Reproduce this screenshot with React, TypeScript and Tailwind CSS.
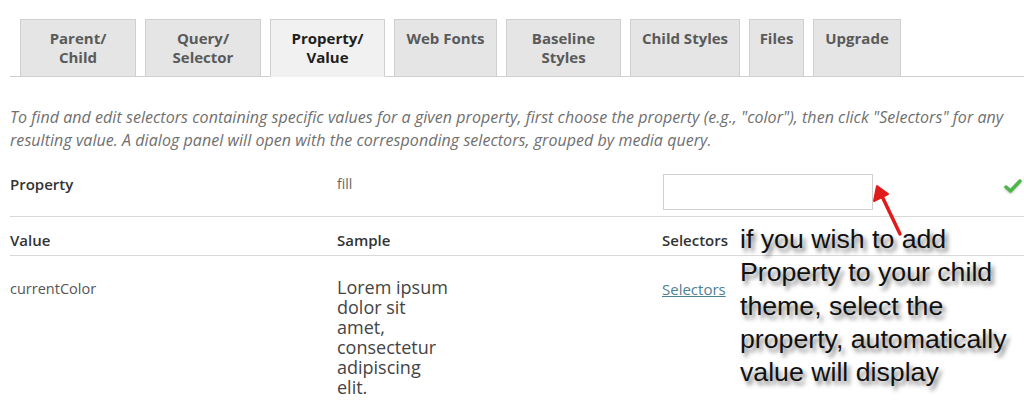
import { memo } from 'react'

const tabs = [
  { label: ['Parent/', 'Child'], w: 'w-[116px]' },
  { label: ['Query/', 'Selector'], w: 'w-[116px]' },
  { label: ['Property/', 'Value'], w: 'w-[115px]', active: true },
  { label: ['Web Fonts'], w: 'w-[103px]' },
  { label: ['Baseline', 'Styles'], w: 'w-[115px]' },
  { label: ['Child Styles'], w: 'w-[110px]' },
  { label: ['Files'], w: 'w-[55px]' },
  { label: ['Upgrade'], w: 'w-[88px]' },
]

const TabBar = () => (
  <div className="ml-[10px] mt-[19px] flex h-[58px] items-end gap-[9px] border-b border-[#cfcfcf] pl-[10px]">
    {tabs.map((t) => (
      <div
        key={t.label.join('')}
        className={`${t.w} -mb-px flex h-[58px] flex-col items-center border border-[#cfcfcf] pt-[9px] text-[15px] leading-[19px] font-bold ${
          t.active
            ? 'border-b-[#f1f1f1] bg-[#f1f1f1] text-[#1e1e1e]'
            : 'bg-[#e5e5e5] text-[#5a5a5a]'
        }`}
      >
        {t.label.map((l) => (
          <span key={l}>{l}</span>
        ))}
      </div>
    ))}
  </div>
)

const Check = () => (
  <svg width="18" height="16" viewBox="0 0 18 16" className="drop-shadow-[0_1px_1px_rgba(0,0,0,0.25)]">
    <path d="M2 9 L6.5 13 L16 3" fill="none" stroke="#4cb648" strokeWidth="3.4" strokeLinecap="round" strokeLinejoin="round" />
  </svg>
)

const Arrow = () => (
  <svg width="40" height="60" viewBox="0 0 40 60" className="absolute left-[866px] top-[182px]">
    <path d="M34 52 L14 10" stroke="#e01b1b" strokeWidth="3.5" strokeLinecap="round" />
    <path d="M11 4 L8 19 L22 12 Z" fill="#e01b1b" stroke="#e01b1b" strokeWidth="2" strokeLinejoin="round" />
  </svg>
)

const App = memo(() => {
  return (
    <main className="relative h-[403px] w-[1024px] overflow-hidden bg-white font-['Open_Sans','Noto_Sans',sans-serif]">
      <TabBar />

      <p className="ml-[10px] mt-[29px] whitespace-nowrap text-[16px] leading-[23px] tracking-[0.05px] text-[#6f6f6f] italic">
        To find and edit selectors containing specific values for a given property, first choose the property
        (e.g., &quot;color&quot;), then click &quot;Selectors&quot; for any
        <br />
        resulting value. A dialog panel will open with the corresponding selectors, grouped by media query.
      </p>

      <div className="ml-[10px] mt-[12px]">
        <div className="grid h-[53px] grid-cols-[327px_325px_1fr] items-start border-b border-[#d9d9d9] pt-[10px]">
          <span className="text-[15px] leading-[20px] font-semibold text-[#333]">Property</span>
          <span className="text-[14px] leading-[20px] text-[#666]">fill</span>
          <div className="flex items-start justify-between pr-[2px]">
            <input className="ml-px h-[36px] w-[210px] border border-[#cfcfcf] bg-white" />
            <div className="pt-[4px]">
              <Check />
            </div>
          </div>
        </div>

        <div className="grid h-[39px] grid-cols-[327px_325px_1fr] items-start border-b border-[#d9d9d9] pt-[13px]">
          <span className="text-[15px] leading-[20px] font-semibold text-[#333]">Value</span>
          <span className="text-[15px] leading-[20px] font-semibold text-[#333]">Sample</span>
          <span className="text-[15px] leading-[20px] font-semibold text-[#333]">Selectors</span>
        </div>

        <div className="grid grid-cols-[327px_325px_1fr] items-start pt-[23px]">
          <span className="text-[14.5px] leading-[20px] text-[#555]">currentColor</span>
          <span className="-mt-[2px] w-[116px] text-[18px] leading-[20px] text-[#444]">
            Lorem ipsum dolor sit amet, consectetur adipiscing elit.
          </span>
          <a className="text-[15px] leading-[20px] text-[#4d7f96] underline">Selectors</a>
        </div>
      </div>

      <Arrow />

      <div className="absolute left-[740px] top-[223px] font-['Liberation_Sans',Arial,sans-serif] text-[26.7px] leading-[33.3px] text-[#111] [text-shadow:3px_4px_4px_rgba(0,0,0,0.5)]">
        <div>if you wish to add</div>
        <div>Property to your child</div>
        <div>theme, select the</div>
        <div>property, automatically</div>
        <div>value will display</div>
      </div>
    </main>
  )
})

App.displayName = 'App'

export default App
